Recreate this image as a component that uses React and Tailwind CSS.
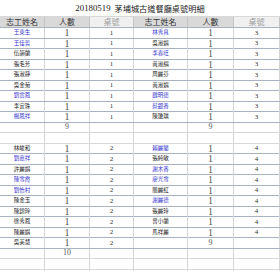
import React from "react"

// 0 = black name, 1 = blue name
const topLeft = [["王東生", 1], ["王佳哲", 1], ["伍韻蘭", 0], ["張毛芳", 0], ["張淑靜", 0], ["吳金菊", 0], ["劉雲鳳", 1], ["李宜珠", 0], ["楊鳳祥", 1]]
const topRight = [["林秀真", 1], ["吳淑娟", 0], ["李春旺", 1], ["黃淑絹", 0], ["周麗芬", 0], ["黃淑娟", 0], ["魏明德", 1], ["蔡銀香", 1], ["陳瓊琪", 0]]
const bottomLeft = [["林峻和", 0], ["劉嘉祥", 1], ["許麗娟", 0], ["陳雪霞", 1], ["劉怡村", 1], ["陳金玉", 0], ["陳錦玲", 0], ["徐秀鳳", 0], ["陳麗娟", 0], ["吳美慧", 0]]
const bottomRight = [["賴麗鑾", 1], ["張純敏", 0], ["謝木香", 1], ["廖光雪", 1], ["簡麗紅", 0], ["謝麗德", 1], ["張麗玲", 0], ["曾小蘭", 0], ["馬祥麗", 0]]

const grid = "grid grid-cols-[45px_45px_44px_54px_46px_46px]"
const cjk = { fontFamily: '"Noto Sans CJK TC", "Noto Sans", sans-serif' }

function NameCell({ item }) {
  if (!item) return <div className="border-r border-[#d4d4d4]"></div>
  return (
    <div className={`border-r border-[#d4d4d4] flex items-center justify-center text-[5.5px] leading-none ${item[1] ? "text-[#3535d0]" : "text-[#222]"}`} style={cjk}>
      {item[0]}
    </div>
  )
}

function CountCell({ value, big }) {
  return (
    <div className="border-r border-[#d4d4d4] flex items-center justify-center leading-none font-['Liberation_Serif',serif]">
      {value !== undefined && (
        <span className={big ? "text-[10px] text-[#555]" : "text-[8px] text-[#555]"}>{value}</span>
      )}
    </div>
  )
}

function TableCell({ value }) {
  return (
    <div className="border-r border-[#d4d4d4] flex items-center justify-center leading-none font-['Liberation_Serif',serif] text-[7px] text-[#333]">
      {value}
    </div>
  )
}

function Row({ left, right, leftTable, rightTable, leftTotal, rightTotal, line }) {
  return (
    <div className={`${grid} h-[10.5px] border-b ${line ? "border-[#a9b2c3]" : "border-[#d8d8d8]"}`}>
      <NameCell item={left} />
      {left ? <CountCell value={1} big /> : <CountCell value={leftTotal} />}
      <TableCell value={left ? leftTable : ""} />
      <NameCell item={right} />
      {right ? <CountCell value={1} big /> : <CountCell value={rightTotal} />}
      <TableCell value={right ? rightTable : ""} />
    </div>
  )
}

function App() {
  const rows = []

  // first block: tables 1 and 3
  for (let i = 0; i < 9; i++) {
    rows.push(<Row key={"a" + i} left={topLeft[i]} right={topRight[i]} leftTable={1} rightTable={3} line />)
  }
  rows.push(<Row key="at" leftTotal={9} rightTotal={9} />)
  rows.push(<Row key="blank1" />)

  // second block: tables 2 and 4
  for (let i = 0; i < 10; i++) {
    rows.push(
      <Row key={"b" + i} left={bottomLeft[i]} right={bottomRight[i]} leftTable={2} rightTable={4} rightTotal={i === 9 ? 9 : undefined} line />
    )
  }
  rows.push(<Row key="bt" leftTotal={10} />)
  rows.push(<Row key="blank2" />)
  rows.push(<Row key="blank3" />)

  return (
    <div className="w-[280px] h-[271px] overflow-hidden bg-white">

      {/* Title */}
      <div className="h-[17px] flex items-center justify-center border-b border-[#d8d8d8] text-[#222] leading-none">
        <span className="text-[8.8px] font-['Liberation_Serif',serif] mr-[4px]">20180519</span>
        <span className="text-[8.2px]" style={cjk}>茅埔城古道餐廳桌號明細</span>
      </div>

      {/* Header */}
      <div className={`${grid} h-[11px] border-b border-[#a9b2c3] text-[8px] leading-none`} style={cjk}>
        <div className="bg-[#d9d9d9] border-r border-[#c4c4c4] flex items-center justify-center text-[#333]">志工姓名</div>
        <div className="bg-[#d9d9d9] border-r border-[#c4c4c4] flex items-center justify-center text-[#333]">人數</div>
        <div className="bg-[#f0f0f0] border-r border-[#c4c4c4] flex items-center justify-center text-[#999]">桌號</div>
        <div className="bg-[#d9d9d9] border-r border-[#c4c4c4] flex items-center justify-center text-[#333]">志工姓名</div>
        <div className="bg-[#d9d9d9] border-r border-[#c4c4c4] flex items-center justify-center text-[#333]">人數</div>
        <div className="bg-[#f0f0f0] border-r border-[#c4c4c4] flex items-center justify-center text-[#999]">桌號</div>
      </div>

      {rows}

    </div>
  )
}

export default App
